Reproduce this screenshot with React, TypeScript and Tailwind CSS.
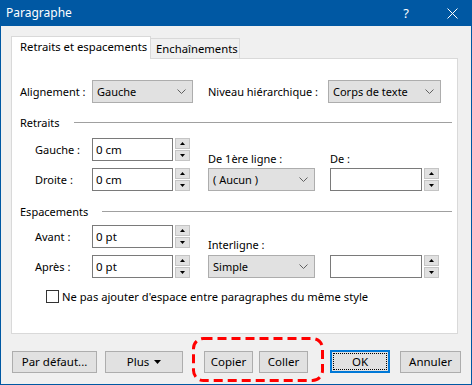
import type { ReactNode } from "react";

const font = { fontFamily: '"Noto Sans", "Segoe UI", sans-serif' };

const Chevron = () => (
	<svg width="9" height="6" viewBox="0 0 9 6" className="shrink-0">
		<polyline points="0.5,0.5 4.5,4.5 8.5,0.5" fill="none" stroke="#606060" strokeWidth="1" />
	</svg>
);

const Select = ({ value, w }: { value: string; w: string }) => (
	<div className={`${w} h-[23px] flex items-center justify-between pl-[4px] pr-[6px] bg-[#e1e1e1] border border-[#adadad]`}>
		<span>{value}</span>
		<Chevron />
	</div>
);

const Spin = () => (
	<div className="w-[15px] h-[23px] ml-[2px] flex flex-col justify-between">
		<div className="h-[11px] bg-[#e1e1e1] border border-[#c4c4c4] flex items-center justify-center">
			<svg width="5" height="3" viewBox="0 0 5 3">
				<polygon points="2.5,0 5,3 0,3" fill="#000" />
			</svg>
		</div>
		<div className="h-[11px] bg-[#e1e1e1] border border-[#c4c4c4] flex items-center justify-center">
			<svg width="5" height="3" viewBox="0 0 5 3">
				<polygon points="0,0 5,0 2.5,3" fill="#000" />
			</svg>
		</div>
	</div>
);

const Input = ({ value, w }: { value: string; w: string }) => (
	<div className="flex items-center">
		<div className={`${w} h-[23px] flex items-center pl-[3px] bg-white border border-[#7a7a7a] text-[11.5px]`}>{value}</div>
		<Spin />
	</div>
);

const Header = ({ children }: { children: ReactNode }) => (
	<div className="h-[14px] flex items-center pr-[5px]">
		<span>{children}</span>
		<div className="flex-1 h-px bg-[#a0a0a0] ml-[14px]" />
	</div>
);

const Button = ({ children, w, className = "" }: { children: ReactNode; w: string; className?: string }) => (
	<div className={`${w} h-[22px] flex items-center justify-center bg-[#e1e1e1] border border-[#adadad] ${className}`}>{children}</div>
);

export default function App() {
	return (
		<div className="w-[472px] h-[385px] bg-[#f0f0f0] border-x border-b border-[#0058a3] flex flex-col text-[11px] text-black leading-none whitespace-nowrap" style={font}>
			<div className="h-[26px] -mx-px bg-[#0058a3] text-white text-[12px] flex items-center pl-[6px] pr-[14px] shrink-0">
				<span className="flex-1">Paragraphe</span>
				<span className="mr-[38px] text-[13px]">?</span>
				<svg width="11" height="11" viewBox="0 0 11 11">
					<path d="M0.5 0.5 L10.5 10.5 M10.5 0.5 L0.5 10.5" stroke="#fff" strokeWidth="1" />
				</svg>
			</div>

			<div className="pl-[10px] pr-[13px] pt-[10px]">
				<div className="flex items-end h-[22px]">
					<div className="w-[140px] h-[23px] -mb-px bg-white border border-b-0 border-[#d9d9d9] flex items-center pl-[8px] pb-[2px] relative z-10 text-[11.3px]">Retraits et espacements</div>
					<div className="w-[89px] h-[20px] border border-l-0 border-b-0 border-[#d9d9d9] flex items-center pl-[5px] text-[11.3px]">Enchaînements</div>
				</div>
				<div className="h-[276px] bg-white border border-[#d9d9d9] pl-[8px]">
					<div className="mt-[21px] flex items-center h-[23px]">
						<span className="w-[72px]">Alignement :</span>
						<Select value="Gauche" w="w-[101px]" />
						<span className="ml-[15px] w-[120px]">Niveau hiérarchique :</span>
						<Select value="Corps de texte" w="w-[113px]" />
					</div>

					<div className="mt-[12px]">
						<Header>Retraits</Header>
					</div>

					<div className="mt-[9px] flex">
						<div className="w-[188px] flex flex-col gap-[7px]">
							<div className="flex items-center h-[23px]">
								<span className="w-[72px] pl-[15px]">Gauche :</span>
								<Input value="0 cm" w="w-[81px]" />
							</div>
							<div className="flex items-center h-[23px]">
								<span className="w-[72px] pl-[15px]">Droite :</span>
								<Input value="0 cm" w="w-[81px]" />
							</div>
						</div>
						<div className="flex flex-col justify-end">
							<div className="flex h-[14px] items-center">
								<span className="w-[122px]">De 1ère ligne :</span>
								<span>De :</span>
							</div>
							<div className="mt-[3px] flex items-center">
								<Select value="( Aucun )" w="w-[107px]" />
								<div className="ml-[15px]">
									<Input value="" w="w-[92px]" />
								</div>
							</div>
						</div>
					</div>

					<div className="mt-[13px]">
						<Header>Espacements</Header>
					</div>

					<div className="mt-[7px] flex">
						<div className="w-[188px] flex flex-col gap-[7px]">
							<div className="flex items-center h-[23px]">
								<span className="w-[72px] pl-[15px]">Avant :</span>
								<Input value="0 pt" w="w-[81px]" />
							</div>
							<div className="flex items-center h-[23px]">
								<span className="w-[72px] pl-[15px]">Après :</span>
								<Input value="0 pt" w="w-[81px]" />
							</div>
						</div>
						<div className="flex flex-col justify-end">
							<div className="flex h-[14px] items-center">
								<span>Interligne :</span>
							</div>
							<div className="mt-[4px] flex items-center">
								<Select value="Simple" w="w-[107px]" />
								<div className="ml-[15px]">
									<Input value="" w="w-[92px]" />
								</div>
							</div>
						</div>
					</div>

					<div className="mt-[12px] flex items-center h-[13px] pl-[26px]">
						<div className="w-[13px] h-[13px] border border-[#333] bg-white" />
						<span className="ml-[3px] text-[11.2px]">Ne pas ajouter d'espace entre paragraphes du même style</span>
					</div>
				</div>
			</div>

			<div className="relative mt-[16px] flex items-center pl-[11px] text-[11.5px]">
				<Button w="w-[85px]">Par défaut...</Button>
				<Button w="w-[78px]" className="ml-[8px] gap-[5px]">
					<span>Plus</span>
					<svg width="7" height="4" viewBox="0 0 7 4">
						<polygon points="0,0 7,0 3.5,4" fill="#000" />
					</svg>
				</Button>
				<Button w="w-[49px]" className="ml-[21px]">Copier</Button>
				<Button w="w-[49px]" className="ml-[6px]">Coller</Button>
				<div className="ml-[22px] w-[60px] h-[23px] border-2 border-[#0078d7] bg-[#e1e1e1] p-px">
					<div className="w-full h-full border border-dotted border-black flex items-center justify-center">OK</div>
				</div>
				<Button w="w-[61px]" className="ml-[10px]">Annuler</Button>
				<svg className="absolute left-[191px] top-[-13px]" width="132" height="45" viewBox="0 0 132 45">
					<rect x="1.5" y="1.5" width="129" height="42" rx="10" fill="none" stroke="#ff0000" strokeWidth="3" strokeDasharray="9 5" />
				</svg>
			</div>
		</div>
	);
}
